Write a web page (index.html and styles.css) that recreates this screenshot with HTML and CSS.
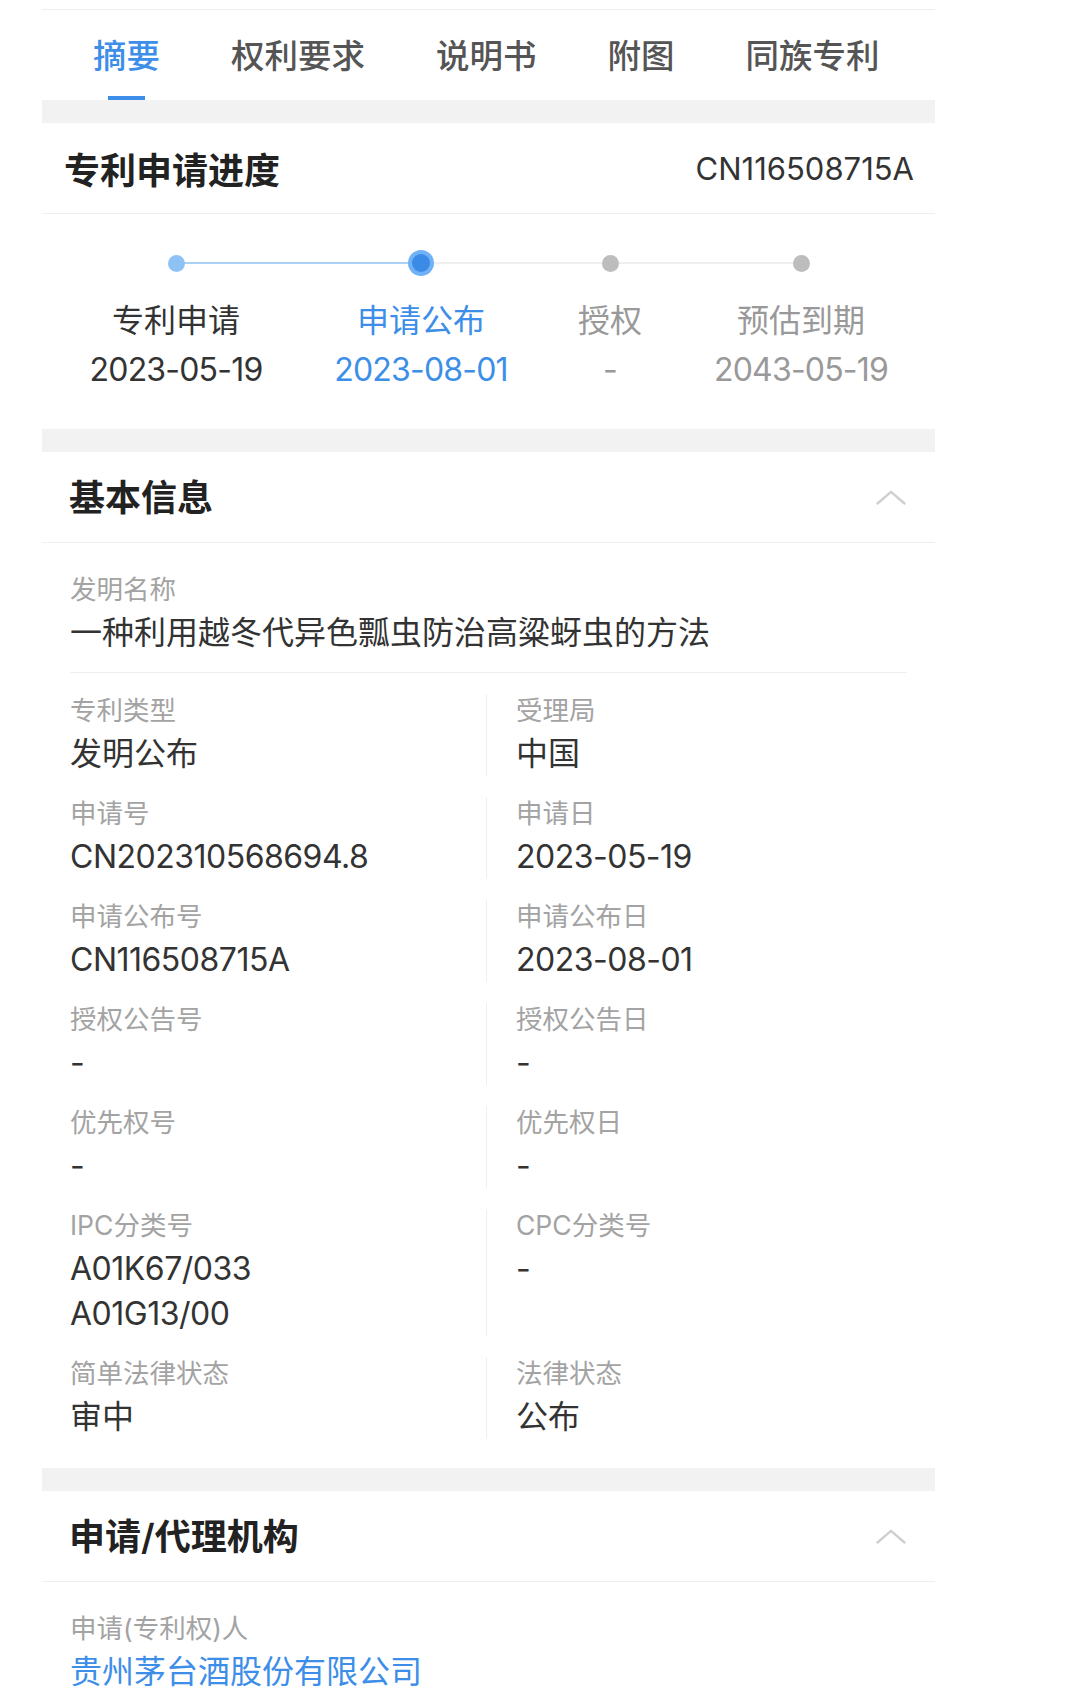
FILE: index.html
```html
<!DOCTYPE html>
<html lang="zh-CN">
<head>
<meta charset="utf-8">
<title>专利详情</title>
<link rel="stylesheet" href="styles.css">
</head>
<body>
<div class="page">
  <nav class="tabs">
    <a class="tab active">摘要</a>
    <a class="tab">权利要求</a>
    <a class="tab">说明书</a>
    <a class="tab">附图</a>
    <a class="tab">同族专利</a>
  </nav>

  <div class="band"></div>

  <section class="card">
    <header class="card-head progress-head">
      <h2>专利申请进度</h2>
      <span class="pub-no">CN116508715A</span>
    </header>
    <ol class="steps">
      <li class="step done">
        <span class="track"><i class="dot"></i></span>
        <span class="step-name">专利申请</span>
        <span class="step-date num">2023-05-19</span>
      </li>
      <li class="step current">
        <span class="track"><i class="dot"></i></span>
        <span class="step-name">申请公布</span>
        <span class="step-date num">2023-08-01</span>
      </li>
      <li class="step todo">
        <span class="track"><i class="dot"></i></span>
        <span class="step-name">授权</span>
        <span class="step-date num">-</span>
      </li>
      <li class="step todo last">
        <span class="track"><i class="dot"></i></span>
        <span class="step-name">预估到期</span>
        <span class="step-date num">2043-05-19</span>
      </li>
    </ol>
  </section>

  <div class="band"></div>

  <section class="card">
    <header class="card-head">
      <h2>基本信息</h2>
      <svg class="chevron" width="30" height="15" viewBox="0 0 30 15"><polyline points="1.5,13.5 15,1.8 28.5,13.5" fill="none" stroke="#cfcfcf" stroke-width="2.4" stroke-linecap="round" stroke-linejoin="round"/></svg>
    </header>
    <div class="fields">
      <div class="field wide">
        <div class="label">发明名称</div>
        <div class="value">一种利用越冬代异色瓢虫防治高粱蚜虫的方法</div>
      </div>
      <div class="grid">
        <div class="field"><div class="label">专利类型</div><div class="value">发明公布</div></div>
        <div class="field right"><div class="label">受理局</div><div class="value">中国</div></div>
        <div class="field"><div class="label">申请号</div><div class="value num">CN202310568694.8</div></div>
        <div class="field right"><div class="label">申请日</div><div class="value num">2023-05-19</div></div>
        <div class="field"><div class="label">申请公布号</div><div class="value num">CN116508715A</div></div>
        <div class="field right"><div class="label">申请公布日</div><div class="value num">2023-08-01</div></div>
        <div class="field"><div class="label">授权公告号</div><div class="value num">-</div></div>
        <div class="field right"><div class="label">授权公告日</div><div class="value num">-</div></div>
        <div class="field"><div class="label">优先权号</div><div class="value num">-</div></div>
        <div class="field right"><div class="label">优先权日</div><div class="value num">-</div></div>
        <div class="field"><div class="label">IPC分类号</div><div class="value num">A01K67/033</div><div class="value num">A01G13/00</div></div>
        <div class="field right"><div class="label">CPC分类号</div><div class="value num">-</div></div>
        <div class="field"><div class="label">简单法律状态</div><div class="value">审中</div></div>
        <div class="field right"><div class="label">法律状态</div><div class="value">公布</div></div>
      </div>
    </div>
  </section>

  <div class="band"></div>

  <section class="card">
    <header class="card-head">
      <h2>申请/代理机构</h2>
      <svg class="chevron" width="30" height="15" viewBox="0 0 30 15"><polyline points="1.5,13.5 15,1.8 28.5,13.5" fill="none" stroke="#cfcfcf" stroke-width="2.4" stroke-linecap="round" stroke-linejoin="round"/></svg>
    </header>
    <div class="fields">
      <div class="field">
        <div class="label">申请(专利权)人</div>
        <div class="value link">贵州茅台酒股份有限公司</div>
      </div>
    </div>
  </section>
</div>
</body>
</html>
```
FILE: styles.css
```css
* { box-sizing: border-box; }
html, body { margin: 0; padding: 0; background: #fff; }
body {
  font-family: Inter, "Noto Sans CJK SC", sans-serif;
  color: #333;
}
.page {
  width: 893px;
  margin-left: 42px;
  padding-top: 9px;
}
.tabs {
  display: flex;
  gap: 71px;
  height: 91px;
  padding-left: 51px;
  border-top: 1px solid #eeeeee;
}
.tab {
  position: relative;
  display: flex;
  align-items: center;
  padding-bottom: 3px;
  font-size: 33.5px;
  font-weight: 500;
  color: #555;
  white-space: nowrap;
}
.tab.active { color: #3d8ee8; }
.tab.active::after {
  content: "";
  position: absolute;
  left: 50%;
  bottom: 0;
  width: 37px;
  height: 4px;
  margin-left: -18.5px;
  background: #3d8ee8;
}
.band { height: 23px; background: #f2f2f2; }
.card { background: #fff; }
.card-head {
  display: flex;
  align-items: center;
  justify-content: space-between;
  height: 91px;
  padding: 0 29px 4px 27px;
  border-bottom: 1px solid #efefef;
}
.card-head h2 {
  margin: 0;
  font-size: 36px;
  font-weight: 600;
  color: #222;
}
.card-head .chevron { margin-top: 4px; }
.progress-head { padding: 0 21px 0 22px; }
.pub-no { font-size: 31px; color: #333; }
.num { letter-spacing: -0.5px; }

.steps {
  list-style: none;
  margin: 0;
  padding: 36px 11px 37px 10px;
  display: grid;
  grid-template-columns: 248px 242px 136px 246px;
}
.step {
  display: flex;
  flex-direction: column;
  align-items: center;
  white-space: nowrap;
}
.track {
  position: relative;
  align-self: stretch;
  height: 26px;
  display: flex;
  align-items: center;
  justify-content: center;
}
.track::before, .track::after {
  content: "";
  position: absolute;
  top: 12px;
  height: 2px;
  width: 50%;
  background: #efefef;
}
.track::before { left: 0; }
.track::after { right: 0; }
.step:first-child .track::before,
.step.last .track::after { display: none; }
.step.done .track::after,
.step.current .track::before { background: #abd1f7; }
.dot {
  position: relative;
  z-index: 1;
  width: 17px;
  height: 17px;
  border-radius: 50%;
  background: #bdbdbd;
}
.step.done .dot { background: #8fc2f4; }
.step.current .dot {
  width: 18px;
  height: 18px;
  background: #3b8be6;
  box-shadow: 0 0 0 4px #70b2f7;
}
.step-name {
  margin-top: 23px;
  font-size: 32px;
  line-height: 44px;
  color: #999;
}
.step-date {
  margin-top: 5px;
  font-size: 32px;
  line-height: 44px;
  color: #999;
}
.step-date.num { letter-spacing: -0.8px; }
.step.done .step-name, .step.done .step-date { color: #333; }
.step.current .step-name, .step.current .step-date { color: #3d8ee8; }

.fields { padding: 30px 28px 29px; }
.field .label {
  font-size: 26.5px;
  line-height: 32px;
  color: #a3a3a3;
}
.field .value {
  font-size: 32px;
  line-height: 45px;
  color: #333;
}
.field .label + .value { margin-top: 5px; }
.value.link { color: #3d8ee8; }
.field.wide {
  padding-bottom: 17px;
  border-bottom: 1px solid #efefef;
}
.grid {
  display: grid;
  grid-template-columns: 416px 1fr;
  row-gap: 21px;
  margin-top: 21px;
}
.field.right {
  padding-left: 29px;
  border-left: 1px solid #efefef;
}
```
